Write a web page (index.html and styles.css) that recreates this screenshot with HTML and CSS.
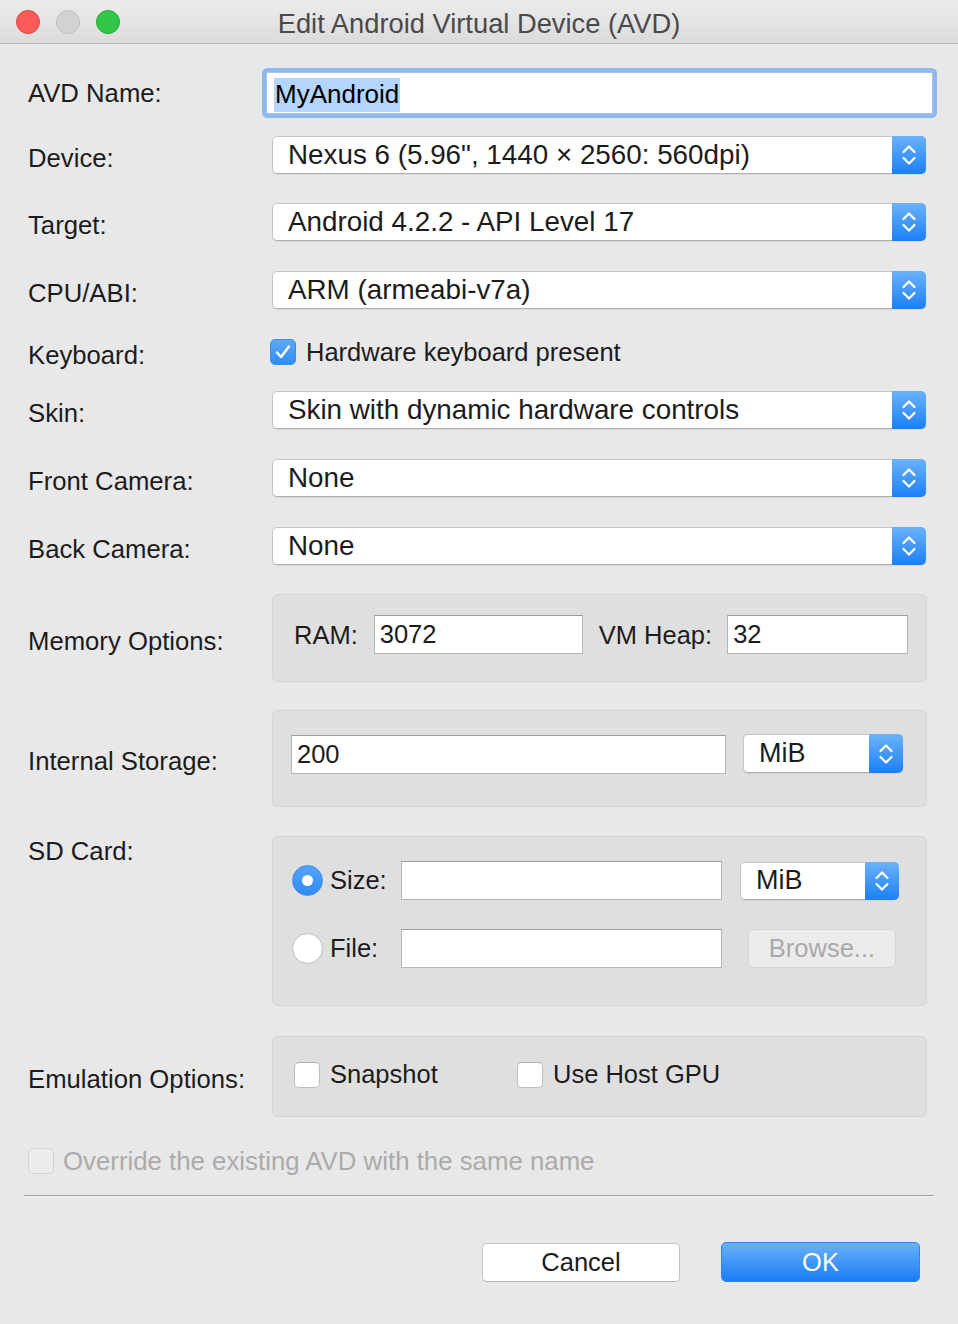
FILE: index.html
```html
<!DOCTYPE html>
<html>
<head>
<meta charset="utf-8">
<title>Edit Android Virtual Device (AVD)</title>
<link rel="stylesheet" href="styles.css">
</head>
<body>
<div class="window">
  <div class="titlebar">
    <div class="lights">
      <span class="light red"></span>
      <span class="light gray"></span>
      <span class="light green"></span>
    </div>
    <div class="title">Edit Android Virtual Device (AVD)</div>
    <div></div>
  </div>

  <div class="form">
    <div class="row row-name">
      <div class="lbl">AVD Name:</div>
      <div class="field focus"><span class="hl">MyAndroid</span></div>
    </div>

    <div class="row row-device">
      <div class="lbl">Device:</div>
      <div class="select wide"><span class="val">Nexus 6 (5.96", 1440 × 2560: 560dpi)</span><span class="arrow"><svg width="16" height="24" viewBox="0 0 16 24"><path d="M2.5 9 L8 3.5 L13.5 9 M2.5 15 L8 20.5 L13.5 15" fill="none" stroke="#fff" stroke-width="2.2" stroke-linecap="round" stroke-linejoin="round"/></svg></span></div>
    </div>

    <div class="row row-gap29">
      <div class="lbl">Target:</div>
      <div class="select wide"><span class="val">Android 4.2.2 - API Level 17</span><span class="arrow"><svg width="16" height="24" viewBox="0 0 16 24"><path d="M2.5 9 L8 3.5 L13.5 9 M2.5 15 L8 20.5 L13.5 15" fill="none" stroke="#fff" stroke-width="2.2" stroke-linecap="round" stroke-linejoin="round"/></svg></span></div>
    </div>

    <div class="row row-gap30">
      <div class="lbl">CPU/ABI:</div>
      <div class="select wide"><span class="val">ARM (armeabi-v7a)</span><span class="arrow"><svg width="16" height="24" viewBox="0 0 16 24"><path d="M2.5 9 L8 3.5 L13.5 9 M2.5 15 L8 20.5 L13.5 15" fill="none" stroke="#fff" stroke-width="2.2" stroke-linecap="round" stroke-linejoin="round"/></svg></span></div>
    </div>

    <div class="row row-keyboard">
      <div class="lbl">Keyboard:</div>
      <div class="check-item kb">
        <span class="checkbox checked"><svg width="26" height="26" viewBox="0 0 26 26"><path d="M7 13.5 L11 18 L19 7.5" fill="none" stroke="#fff" stroke-width="2.4" stroke-linecap="round" stroke-linejoin="round"/></svg></span>
        <span class="ctext">Hardware keyboard present</span>
      </div>
    </div>

    <div class="row row-skin">
      <div class="lbl">Skin:</div>
      <div class="select wide"><span class="val">Skin with dynamic hardware controls</span><span class="arrow"><svg width="16" height="24" viewBox="0 0 16 24"><path d="M2.5 9 L8 3.5 L13.5 9 M2.5 15 L8 20.5 L13.5 15" fill="none" stroke="#fff" stroke-width="2.2" stroke-linecap="round" stroke-linejoin="round"/></svg></span></div>
    </div>

    <div class="row row-gap30">
      <div class="lbl">Front Camera:</div>
      <div class="select wide"><span class="val">None</span><span class="arrow"><svg width="16" height="24" viewBox="0 0 16 24"><path d="M2.5 9 L8 3.5 L13.5 9 M2.5 15 L8 20.5 L13.5 15" fill="none" stroke="#fff" stroke-width="2.2" stroke-linecap="round" stroke-linejoin="round"/></svg></span></div>
    </div>

    <div class="row row-gap30">
      <div class="lbl">Back Camera:</div>
      <div class="select wide"><span class="val">None</span><span class="arrow"><svg width="16" height="24" viewBox="0 0 16 24"><path d="M2.5 9 L8 3.5 L13.5 9 M2.5 15 L8 20.5 L13.5 15" fill="none" stroke="#fff" stroke-width="2.2" stroke-linecap="round" stroke-linejoin="round"/></svg></span></div>
    </div>

    <div class="row row-gap29">
      <div class="lbl">Memory Options:</div>
      <div class="group mem">
        <span class="glabel">RAM:</span>
        <div class="field ram">3072</div>
        <span class="glabel">VM Heap:</span>
        <div class="field heap">32</div>
      </div>
    </div>

    <div class="row row-storage">
      <div class="lbl">Internal Storage:</div>
      <div class="group storage">
        <div class="field storage-field">200</div>
        <div class="select unit"><span class="val">MiB</span><span class="arrow"><svg width="16" height="24" viewBox="0 0 16 24"><path d="M2.5 9 L8 3.5 L13.5 9 M2.5 15 L8 20.5 L13.5 15" fill="none" stroke="#fff" stroke-width="2.2" stroke-linecap="round" stroke-linejoin="round"/></svg></span></div>
      </div>
    </div>

    <div class="row row-sd">
      <div class="lbl lbl-top">SD Card:</div>
      <div class="group sd">
        <div class="sd-row">
          <span class="radio on"><span class="dot"></span></span>
          <span class="sd-label">Size:</span>
          <div class="field sd-field"></div>
          <div class="select unit sd-unit"><span class="val">MiB</span><span class="arrow"><svg width="16" height="24" viewBox="0 0 16 24"><path d="M2.5 9 L8 3.5 L13.5 9 M2.5 15 L8 20.5 L13.5 15" fill="none" stroke="#fff" stroke-width="2.2" stroke-linecap="round" stroke-linejoin="round"/></svg></span></div>
        </div>
        <div class="sd-row">
          <span class="radio"></span>
          <span class="sd-label">File:</span>
          <div class="field sd-field"></div>
          <div class="button disabled browse">Browse...</div>
        </div>
      </div>
    </div>

    <div class="row row-gap30">
      <div class="lbl">Emulation Options:</div>
      <div class="group emu">
        <div class="check-item emu-item">
          <span class="checkbox"></span>
          <span class="ctext">Snapshot</span>
        </div>
        <div class="check-item">
          <span class="checkbox"></span>
          <span class="ctext">Use Host GPU</span>
        </div>
      </div>
    </div>

    <div class="row row-override">
      <div class="check-item">
        <span class="checkbox disabled"></span>
        <span class="ctext muted">Override the existing AVD with the same name</span>
      </div>
    </div>

    <div class="separator"></div>

    <div class="buttons">
      <div class="button cancel">Cancel</div>
      <div class="button primary">OK</div>
    </div>
  </div>
</div>
</body>
</html>
```

FILE: styles.css
```css
* { box-sizing: border-box; }

html, body {
  margin: 0;
  padding: 0;
  background: #e8e8e8;
}

body {
  font-family: "Liberation Sans", Arial, sans-serif;
  color: #1c1c1c;
}

.window {
  width: 958px;
  height: 1324px;
  background: #e8e8e8;
  overflow: hidden;
}

/* Title bar */
.titlebar {
  height: 44px;
  display: grid;
  grid-template-columns: 1fr auto 1fr;
  align-items: center;
  background: linear-gradient(#ececec, #dbdbdb);
  border-bottom: 1px solid #b8b8b8;
}

.lights {
  display: flex;
  gap: 16px;
  padding-left: 16px;
}

.light {
  width: 24px;
  height: 24px;
  border-radius: 50%;
  display: block;
}
.light.red { background: #fc5b57; border: 1px solid #e0443f; }
.light.gray { background: #d2d2d2; border: 1px solid #bfbfbf; }
.light.green { background: #32c748; border: 1px solid #25a935; }

.title {
  font-size: 27.3px;
  color: #4a4a4a;
  padding-top: 4px;
}

/* Form */
.form {
  padding: 0 31px 0 28px;
  display: flex;
  flex-direction: column;
}

.row {
  display: flex;
  align-items: center;
}

.lbl {
  width: 244px;
  flex: none;
  font-size: 25.7px;
  padding-top: 6px;
  color: #1c1c1c;
  white-space: nowrap;
}

.row-name .lbl { padding-top: 0; }

.lbl-top {
  align-self: flex-start;
  padding-top: 1px;
}

.row-name { margin-top: 28px; height: 42px; }
.row-device { margin-top: 22px; height: 38px; }
.row-gap29 { margin-top: 29px; }
.row-gap30 { margin-top: 30px; }
.row-keyboard { margin-top: 24px; height: 38px; }
.row-skin { margin-top: 20px; }
.row-storage { margin-top: 28px; }
.row-sd { margin-top: 29px; }
.row-override { margin-top: 25px; height: 38px; }

/* Text fields */
.field {
  background: #fff;
  border: 1px solid #b6b6b6;
  border-top-color: #9d9d9d;
  height: 39px;
  font-size: 25.5px;
  padding-left: 5px;
  display: flex;
  align-items: center;
  color: #1c1c1c;
  flex: none;
}

.field.focus {
  flex: 1;
  height: 42px;
  margin-left: -6px;
  margin-right: -6px;
  border: 1px solid #a5c3ec;
  border-radius: 2px;
  box-shadow: 0 0 0 4px #8fb8ec;
  padding-left: 7px;
  padding-top: 4px;
  font-size: 26px;
}

.hl {
  background: #b4d5fe;
  padding: 1px 1px 2px 1px;
  color: #000;
}

/* Pop-up buttons */
.select {
  display: flex;
  height: 38px;
  background: #fff;
  border: 1px solid #c6c6c6;
  border-bottom-color: #adadad;
  border-radius: 5px;
  box-shadow: 0 1px 1px rgba(0, 0, 0, 0.06);
  flex: none;
}

.select.wide { width: 654px; }

.select .val {
  flex: 1;
  padding-left: 15px;
  font-size: 27.8px;
  display: flex;
  align-items: center;
  white-space: nowrap;
  color: #1c1c1c;
}

.select.unit .val { font-size: 27px; }

.select .arrow {
  width: 34px;
  margin: -1px -1px -1px 0;
  border-radius: 0 5px 5px 0;
  background: linear-gradient(#6bb2fb, #1b80f6);
  display: flex;
  align-items: center;
  justify-content: center;
}

/* Check boxes */
.check-item {
  display: flex;
  align-items: center;
  gap: 10px;
}

.check-item.kb { margin-left: -2px; }

.checkbox {
  width: 26px;
  height: 26px;
  border-radius: 5px;
  background: #fff;
  border: 1px solid #bdbdbd;
  border-top-color: #b0b0b0;
  flex: none;
  display: block;
}

.checkbox svg { display: block; margin: -1px; }

.checkbox.checked {
  background: linear-gradient(#5ea9fa, #2f8cf4);
  border-color: #3a8ff2;
}

.checkbox.disabled {
  background: #ececec;
  border-color: #d2d2d2;
}

.ctext {
  font-size: 25.5px;
  color: #1c1c1c;
  white-space: nowrap;
}

.ctext.muted { color: #ababab; font-size: 25.8px; }

/* Group boxes */
.group {
  width: 655px;
  background: #dfdfdf;
  border: 1px solid #d4d4d4;
  border-radius: 6px;
}

.glabel {
  font-size: 25.5px;
  color: #1c1c1c;
  padding-top: 2px;
}

.mem {
  height: 88px;
  display: flex;
  align-items: center;
  padding-left: 21px;
  padding-bottom: 7px;
}

.mem .ram { width: 209px; margin-left: 16px; margin-right: 16px; }
.mem .heap { width: 181px; margin-left: 15px; }

.storage {
  height: 97px;
  display: flex;
  align-items: flex-start;
  padding-top: 24px;
  padding-left: 18px;
}

.storage-field { width: 435px; }
.select.unit { width: 160px; height: 39px; margin-left: 17px; margin-top: -1px; }

.sd {
  height: 170px;
  padding: 24px 0 0 19px;
  display: flex;
  flex-direction: column;
  gap: 29px;
}

.sd-row {
  display: flex;
  align-items: center;
  height: 39px;
}

.radio {
  width: 31px;
  height: 31px;
  border-radius: 50%;
  background: #fff;
  border: 1px solid #bcbcbc;
  flex: none;
  margin-right: 7px;
  display: flex;
  align-items: center;
  justify-content: center;
}

.radio.on {
  background: linear-gradient(#55a3f9, #2f8bf4);
  border-color: #3a8ff2;
}

.radio .dot {
  width: 11px;
  height: 11px;
  border-radius: 50%;
  background: #fff;
}

.sd-label {
  width: 71px;
  font-size: 25.5px;
}

.sd-field { width: 321px; }
.select.sd-unit { margin-left: 18px; width: 159px; height: 38px; margin-top: 0; }

.button {
  display: flex;
  align-items: center;
  justify-content: center;
  border-radius: 5px;
  font-size: 25.5px;
}

.browse {
  margin-left: 26px;
  width: 148px;
  height: 39px;
  margin-top: -1px;
  background: #ebebeb;
  border: 1px solid #d5d5d5;
  color: #a9a9a9;
}

.emu {
  height: 81px;
  display: flex;
  align-items: flex-start;
  padding-top: 23px;
  padding-left: 21px;
}

.emu-item { width: 223px; }

.row-override .check-item { gap: 9px; }

/* Separator & buttons */
.separator {
  margin: 15px -7px 0 -4px;
  height: 2px;
  border-top: 1px solid #a4a4a4;
  border-bottom: 1px solid #f2f2f2;
}

.buttons {
  display: flex;
  justify-content: flex-end;
  gap: 41px;
  margin-top: 45px;
  margin-right: 7px;
}

.button.cancel {
  width: 198px;
  height: 39px;
  margin-top: 1px;
  background: #fff;
  border: 1px solid #c6c6c6;
  border-bottom-color: #b3b3b3;
  color: #1c1c1c;
}

.button.primary {
  width: 199px;
  height: 40px;
  background: linear-gradient(#6ab0fa, #1a7ef5);
  border: 1px solid #2f86ef;
  color: #fff;
}
```
